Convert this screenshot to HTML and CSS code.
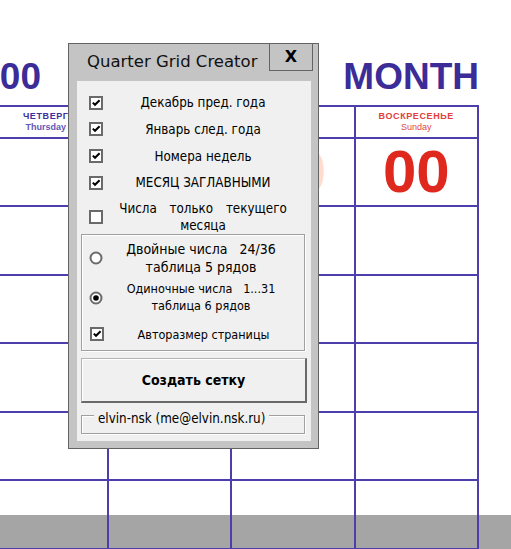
FILE: index.html
```html
<!DOCTYPE html>
<html lang="ru">
<head>
<meta charset="utf-8">
<title>Quarter Grid Creator</title>
<link rel="stylesheet" href="styles.css">
</head>
<body>
<div class="sheet">
  <div class="title-row">
    <div class="year-cell"><span class="year">00</span></div>
    <div class="month">MONTH</div>
  </div>
  <div class="grid">
    <div class="cell head"><div class="dname">ЧЕТВЕРГ</div><div class="ename">Thursday</div></div>
    <div class="cell head"></div>
    <div class="cell head"></div>
    <div class="cell head sun"><div class="dname">ВОСКРЕСЕНЬЕ</div><div class="ename">Sunday</div></div>
    <div class="cell"></div>
    <div class="cell"></div>
    <div class="cell day faded">00</div>
    <div class="cell day red">00</div>
    <div class="cell"></div><div class="cell"></div><div class="cell"></div><div class="cell"></div>
    <div class="cell"></div><div class="cell"></div><div class="cell"></div><div class="cell"></div>
    <div class="cell"></div><div class="cell"></div><div class="cell"></div><div class="cell"></div>
    <div class="cell"></div><div class="cell"></div><div class="cell"></div><div class="cell"></div>
    <div class="cell"></div><div class="cell"></div><div class="cell"></div><div class="cell"></div>
  </div>
</div>

<div class="dialog">
  <div class="titlebar">
    <div class="title">Quarter Grid Creator</div>
    <div class="close">X</div>
  </div>
  <div class="panel">
    <div class="row">
      <svg class="cb" viewBox="0 0 14 14"><rect x="1" y="1" width="12" height="12"/><path d="M3.8 6.6 L6 8.8 L10.6 4.2"/></svg>
      <div class="label">Декабрь пред. года</div>
    </div>
    <div class="row">
      <svg class="cb" viewBox="0 0 14 14"><rect x="1" y="1" width="12" height="12"/><path d="M3.8 6.6 L6 8.8 L10.6 4.2"/></svg>
      <div class="label">Январь след. года</div>
    </div>
    <div class="row">
      <svg class="cb" viewBox="0 0 14 14"><rect x="1" y="1" width="12" height="12"/><path d="M3.8 6.6 L6 8.8 L10.6 4.2"/></svg>
      <div class="label">Номера недель</div>
    </div>
    <div class="row">
      <svg class="cb" viewBox="0 0 14 14"><rect x="1" y="1" width="12" height="12"/><path d="M3.8 6.6 L6 8.8 L10.6 4.2"/></svg>
      <div class="label">МЕСЯЦ ЗАГЛАВНЫМИ</div>
    </div>
    <div class="row row-tall">
      <svg class="cb" viewBox="0 0 14 14"><rect x="1" y="1" width="12" height="12"/></svg>
      <div class="label spread">Числа только текущего<br>месяца</div>
    </div>

    <div class="frame">
      <div class="opt opt-a">
        <svg class="rb" viewBox="0 0 14 14"><circle cx="7" cy="7" r="5.5"/></svg>
        <div class="label">Двойные числа&nbsp;&nbsp; 24/36<br>таблица 5 рядов</div>
      </div>
      <div class="opt opt-b">
        <svg class="rb" viewBox="0 0 14 14"><circle cx="7" cy="7" r="5.5"/><circle class="dot" cx="7" cy="7" r="2.8"/></svg>
        <div class="label">Одиночные числа&nbsp;&nbsp; 1...31<br>таблица 6 рядов</div>
      </div>
      <div class="opt opt-c">
        <svg class="cb" viewBox="0 0 14 14"><rect x="1" y="1" width="12" height="12"/><path d="M3.8 6.6 L6 8.8 L10.6 4.2"/></svg>
        <div class="label">Авторазмер страницы</div>
      </div>
    </div>

    <div class="button">Создать сетку</div>

    <div class="footer">
      <span class="legend">elvin-nsk (me@elvin.nsk.ru)</span>
    </div>
  </div>
</div>
</body>
</html>
```

FILE: styles.css
```css
* { box-sizing: border-box; }

html, body {
  margin: 0;
  padding: 0;
}

body {
  width: 511px;
  height: 549px;
  overflow: hidden;
  position: relative;
  background: linear-gradient(to bottom, #ffffff 0, #ffffff 515px, #a6a5a6 515px);
  font-family: "Liberation Sans", Arial, sans-serif;
}

/* ---------- calendar sheet ---------- */
.sheet {
  margin-left: -15px;
  width: 494px;
}

.title-row {
  height: 105px;
  display: flex;
  align-items: flex-end;
  padding-bottom: 10px;
}

.year-cell {
  width: 56px;
  display: flex;
  justify-content: flex-end;
}

.year,
.month {
  font-weight: bold;
  font-size: 37px;
  line-height: 37px;
  color: #3b2c98;
  white-space: nowrap;
}

.month {
  margin-left: auto;
}

.grid {
  display: grid;
  grid-template-columns: repeat(4, 123.5px);
  grid-template-rows: 31.5px repeat(6, 68.5px);
  border-top: 2px solid #4d3fab;
}

.cell {
  border-right: 2px solid #4d3fab;
  border-bottom: 2px solid #4d3fab;
}

.head {
  display: flex;
  flex-direction: column;
  justify-content: center;
  align-items: center;
  text-align: center;
}

.dname {
  font-size: 9px;
  line-height: 10.5px;
  font-weight: bold;
  letter-spacing: 0.6px;
  color: #3d2f9e;
}

.ename {
  font-size: 9px;
  line-height: 10.5px;
  font-weight: bold;
  color: #6457b6;
}

.sun .dname {
  color: #e2403c;
}

.sun .ename {
  font-weight: normal;
  color: #e04a44;
}

.day {
  display: flex;
  align-items: center;
  justify-content: center;
  font-size: 60px;
  line-height: 60px;
  font-weight: bold;
}

.red {
  color: #e0291e;
}

.faded {
  color: #ffdccd;
}

/* ---------- dialog ---------- */
.dialog {
  position: absolute;
  left: 68px;
  top: 43px;
  width: 251px;
  height: 406px;
  background: #c4c4c4;
  border: 1px solid #646464;
  display: flex;
  flex-direction: column;
  font-family: "DejaVu Sans Condensed", "DejaVu Sans", sans-serif;
  font-stretch: condensed;
  color: #000;
}

.titlebar {
  height: 37px;
  display: flex;
  align-items: flex-start;
}

.title {
  margin: 8px 0 0 18px;
  font-family: "DejaVu Sans", sans-serif;
  font-stretch: normal;
  font-size: 16.5px;
  line-height: 20px;
  color: #111;
  white-space: nowrap;
}

.close {
  margin: -1px 5px 0 auto;
  width: 44px;
  height: 28px;
  border: 1px solid #646464;
  display: flex;
  align-items: center;
  justify-content: center;
  font-family: "DejaVu Sans", sans-serif;
  font-stretch: normal;
  font-weight: bold;
  font-size: 16px;
  line-height: 16px;
}

.panel {
  flex: 1;
  margin: 0 7px 7px 8px;
  background: #f0f0f0;
  padding-top: 8.5px;
  display: flex;
  flex-direction: column;
}

.row {
  height: 26.67px;
  display: flex;
  align-items: center;
}

.row-tall {
  height: 34px;
  margin-top: 4px;
}

.cb,
.rb {
  width: 14px;
  height: 14px;
  flex: none;
}

.cb rect {
  fill: #ffffff;
  stroke: #6a6a6a;
  stroke-width: 2;
}

.cb path {
  fill: none;
  stroke: #000;
  stroke-width: 2;
}

.rb circle {
  fill: #ffffff;
  stroke: #6a6a6a;
  stroke-width: 2;
}

.rb .dot {
  fill: #000;
  stroke: none;
}

.row .cb {
  margin-left: 12px;
}

.label {
  flex: 1;
  text-align: center;
  font-size: 13.3px;
  line-height: 17px;
  white-space: nowrap;
}

.row .label {
  padding-right: 8px;
}

.spread {
  word-spacing: 9px;
}

/* option frame */
.frame {
  margin: 0 6px 0 4px;
  height: 117px;
  border: 1px solid #a0a0a0;
  box-shadow: inset 1px 1px 0 #ffffff, 1px 1px 0 #ffffff;
  padding-top: 5px;
  display: flex;
  flex-direction: column;
}

.opt {
  display: flex;
  align-items: center;
}

.opt .rb {
  margin-left: 7px;
}

.opt .cb {
  margin-left: 8px;
}

.opt-a {
  height: 36px;
}

.opt-a .label {
  font-size: 14px;
  line-height: 18px;
  padding-right: 5px;
}

.opt-b {
  height: 34px;
  margin-top: 5px;
}

.opt-b .label {
  font-size: 12.5px;
  line-height: 16.7px;
  padding-right: 5px;
}

.opt-c {
  height: 26px;
  margin-top: 6px;
}

.opt-c .label {
  font-size: 12.5px;
  padding-right: 1px;
}

/* action button */
.button {
  margin: 7px 0 0 4px;
  width: 226px;
  height: 45px;
  background: #f0f0f0;
  border-top: 1px solid #b4b4b4;
  border-left: 1px solid #b4b4b4;
  border-right: 2px solid #696969;
  border-bottom: 2px solid #696969;
  box-shadow: inset 1px 1px 0 #ffffff;
  display: flex;
  align-items: center;
  justify-content: center;
  font-weight: bold;
  font-size: 14px;
}

/* author frame */
.footer {
  margin: 12px 6px 0 4px;
  height: 19px;
  border: 1px solid #a0a0a0;
  box-shadow: inset 1px 1px 0 #ffffff, 1px 1px 0 #ffffff;
  padding-left: 12px;
}

.legend {
  display: inline-block;
  vertical-align: top;
  margin-top: -6px;
  padding: 0 4px;
  background: #f0f0f0;
  font-size: 13.3px;
  line-height: 17px;
}
```
